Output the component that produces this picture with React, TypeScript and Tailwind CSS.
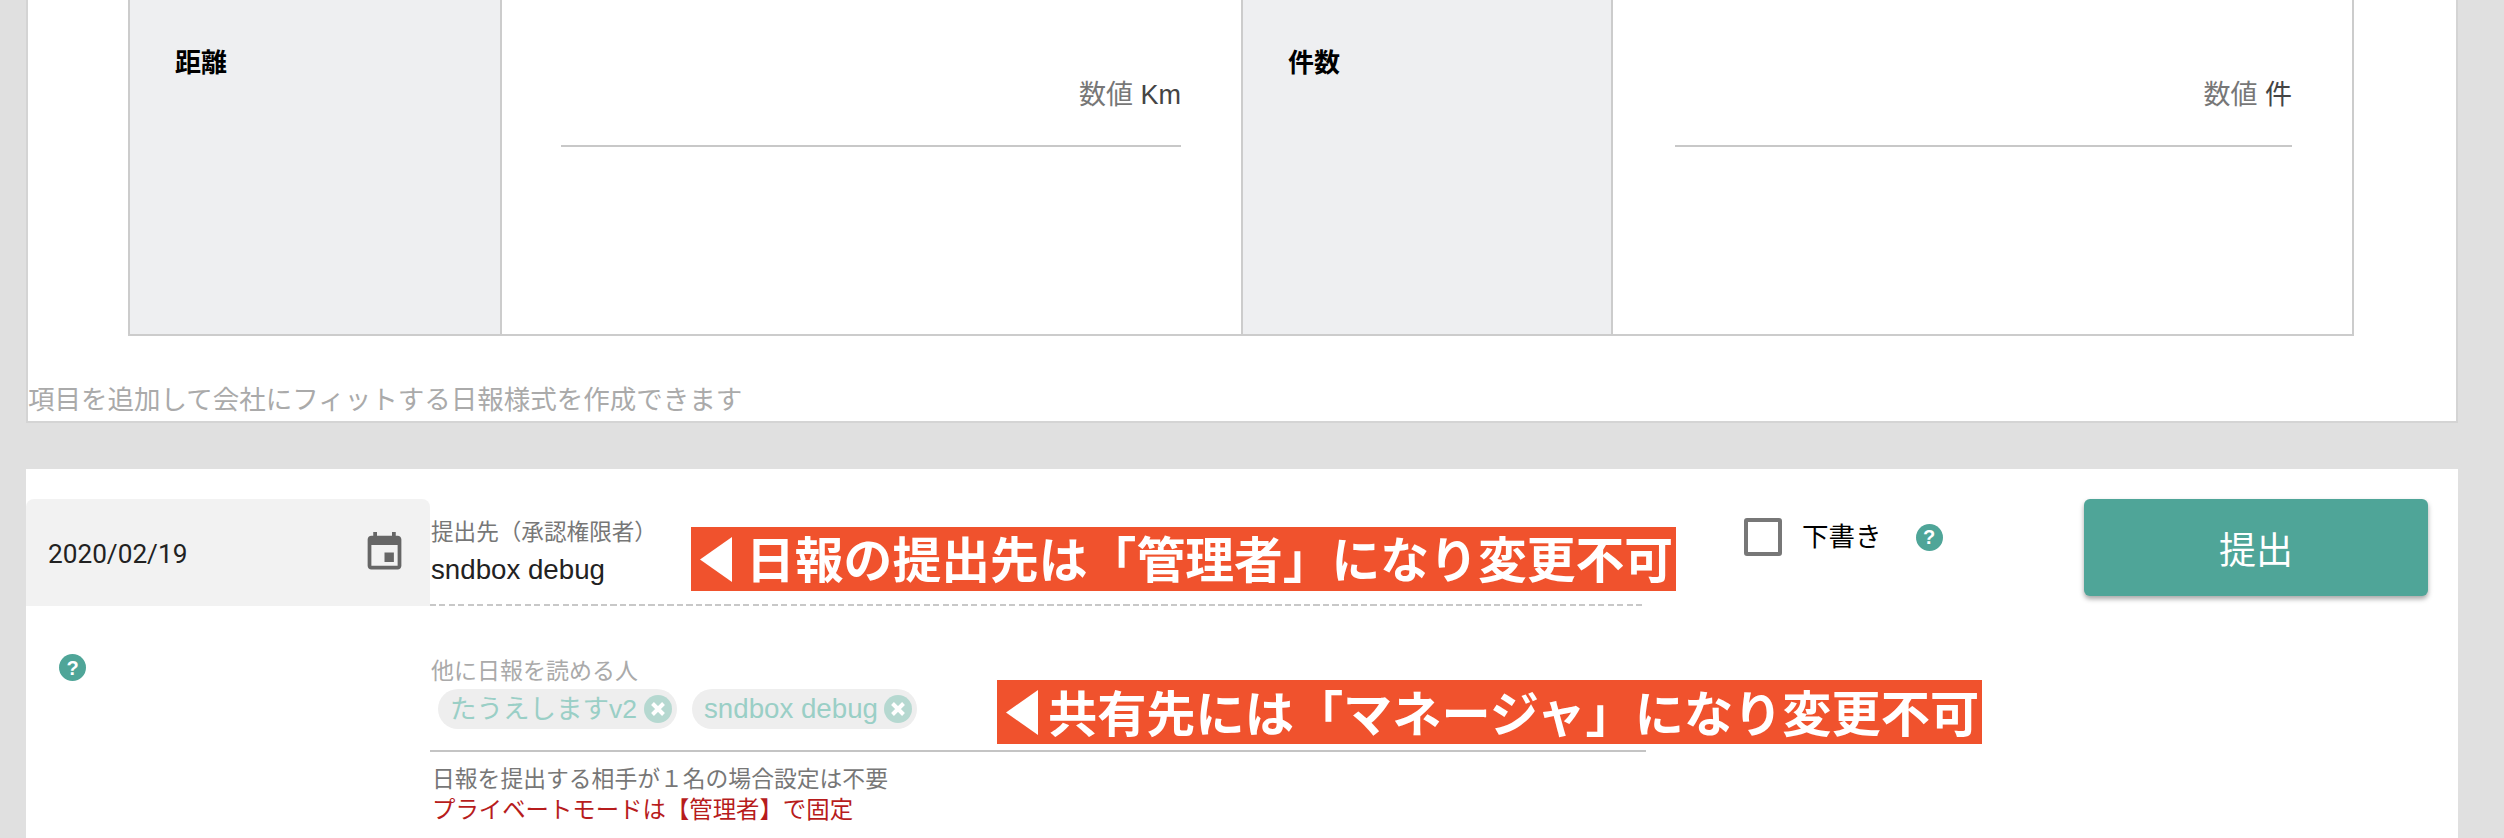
const JP = "[font-family:'Liberation_Sans','Noto_Sans_CJK_JP',sans-serif]";

function HelpIcon() {
  return (
    <span className="flex h-[27px] w-[27px] items-center justify-center rounded-full bg-[#4fa598] text-[20px] font-bold leading-none text-white">
      ?
    </span>
  );
}

function CalendarIcon() {
  return (
    <svg viewBox="0 0 24 24" className="h-[45px] w-[45px] fill-[#666666]">
      <path d="M17 12h-5v5h5v-5zM16 1v2H8V1H6v2H5c-1.11 0-1.99.9-1.99 2L3 19c0 1.1.89 2 2 2h14c1.1 0 2-.9 2-2V5c0-1.1-.9-2-2-2h-1V1h-2zm3 18H5V8h14v11z" />
    </svg>
  );
}

function Triangle() {
  return (
    <svg viewBox="0 0 32 45" className="h-[45px] w-[32px] shrink-0 fill-white">
      <path d="M32 0v45L0 22.5z" />
    </svg>
  );
}

function Chip({ label, width, size }: { label: string; width: string; size: string }) {
  return (
    <span className={`flex h-10 items-center justify-between rounded-full bg-[#eeeeee] pl-[12px] pr-[5px] ${width}`}>
      <span className={`whitespace-nowrap leading-none text-[#9acfc6] ${size}`}>{label}</span>
      <span className="flex h-7 w-7 items-center justify-center rounded-full bg-[#b5d8d0]">
        <svg viewBox="0 0 28 28" className="h-7 w-7 stroke-white stroke-[4]">
          <path d="M8.5 8.5l11 11M19.5 8.5l-11 11" />
        </svg>
      </span>
    </span>
  );
}

function MeasureCell({ label, unit, labelWidth, bodyWidth, inset }: { label: string; unit: string; labelWidth: string; bodyWidth: string; inset: string }) {
  return (
    <>
      <div className={`shrink-0 bg-[#eeeff1] pl-[45px] pt-[48px] text-[26px] font-bold leading-[30px] text-black ${labelWidth}`}>
        {label}
      </div>
      <div className={`shrink-0 border-l-2 border-[#cccccc] pt-[76px] ${bodyWidth}`}>
        <div className={`mr-[60px] border-b-2 border-[#c8c8c8] pb-[31px] text-right text-[27px] leading-[38px] ${inset}`}>
          <span className="text-[#777777]">数値 </span>
          <span className="text-[#444444]">{unit}</span>
        </div>
      </div>
    </>
  );
}

export default function App() {
  return (
    <div lang="ja" className={`flex h-[838px] w-[2504px] flex-col overflow-hidden bg-[#e0e0e0] pl-[26px] ${JP}`}>
      <section className="h-[423px] w-[2432px] shrink-0 border-x-2 border-b-2 border-[#d4d4d4] bg-white">
        <div className="ml-[100px] flex h-[336px] w-[2226px] border-x-2 border-b-2 border-[#cccccc]">
          <MeasureCell label="距離" unit="Km" labelWidth="w-[370px]" bodyWidth="w-[741px]" inset="ml-[59px]" />
          <div className="w-0.5 shrink-0 bg-[#cccccc]" />
          <MeasureCell label="件数" unit="件" labelWidth="w-[368px]" bodyWidth="w-[741px]" inset="ml-[62px]" />
        </div>
        <p className="mt-[49px] text-[26.5px] leading-[30px] text-[#aaaaaa]">項目を追加して会社にフィットする日報様式を作成できます</p>
      </section>

      <section className="relative mt-[46px] flex w-[2432px] flex-1 bg-white">
        <div className="w-[404px] shrink-0 pt-[30px]">
          <div className="flex h-[107px] items-center justify-between rounded-t-lg bg-[#f2f2f2] pl-[22px] pr-[23px]">
            <span className="mt-[4px] font-['Roboto'] text-[26.2px] text-[#222222]">2020/02/19</span>
            <CalendarIcon />
          </div>
          <div className="pl-[33px] pt-[48px]">
            <HelpIcon />
          </div>
        </div>

        <div className="w-[1216px] shrink-0 pt-[30px]">
          <div className="h-[105px] pl-[1px] pt-[21px]">
            <div className="text-[22.6px] leading-[26px] text-[#777777]">提出先（承認権限者）</div>
            <div className="mt-[8px] text-[27.7px] leading-[32px] text-[#222222]">sndbox debug</div>
          </div>
          <div className="h-0.5 bg-[repeating-linear-gradient(90deg,#c8c8c8_0,#c8c8c8_6px,transparent_6px,transparent_9.5px)]" />
          <div className="border-b-2 border-[#c4c4c4] pl-[1px] pt-[52px]">
            <div className="text-[23px] leading-[26px] text-[#aaaaaa]">他に日報を読める人</div>
            <div className="mb-[21px] mt-[5px] flex gap-[15px] pl-[7px]">
              <Chip label="たうえしますv2" width="w-[239px]" size="text-[26.5px]" />
              <Chip label="sndbox debug" width="w-[225px]" size="text-[27.7px]" />
            </div>
          </div>
          <div className="pl-[2px] pt-[12px] text-[22.8px] leading-[31px]">
            <div className="text-[#777777]">日報を提出する相手が１名の場合設定は不要</div>
            <div className="text-[23.4px] text-[#b71c1c]">プライベートモードは【管理者】で固定</div>
          </div>
        </div>

        <div className="box-content flex h-[97px] flex-1 items-start justify-between pl-[98px] pr-[30px] pt-[30px]">
          <div className="flex items-center pt-[19px]">
            <span className="h-[38px] w-[38px] rounded-[3px] border-4 border-[#777777]" />
            <span className="ml-[20px] text-[26.5px] leading-none text-black">下書き</span>
            <span className="ml-[34px]">
              <HelpIcon />
            </span>
          </div>
          <button className="flex h-[97px] w-[344px] items-center justify-center rounded-md bg-[#4fa598] pt-[9px] text-[37px] text-white shadow-[0_3px_5px_rgba(0,0,0,0.35)]">
            提出
          </button>
        </div>

        {/* annotations pasted over the form */}
        <div className="absolute left-[665px] top-[58px] flex h-[64px] w-[985px] items-center gap-[14px] whitespace-nowrap bg-[#f0522d] pl-[9px] text-[48.8px] font-bold leading-none text-white">
          <Triangle />
          <span className="mt-[5px]">日報の提出先は「管理者」になり変更不可</span>
        </div>
        <div className="absolute left-[971px] top-[211px] flex h-[64px] w-[985px] items-center gap-[10px] whitespace-nowrap bg-[#f0522d] pl-[9px] text-[49.2px] font-bold leading-none text-white">
          <Triangle />
          <span className="mt-[5px]">共有先には「マネージャ」になり変更不可</span>
        </div>
      </section>
    </div>
  );
}
